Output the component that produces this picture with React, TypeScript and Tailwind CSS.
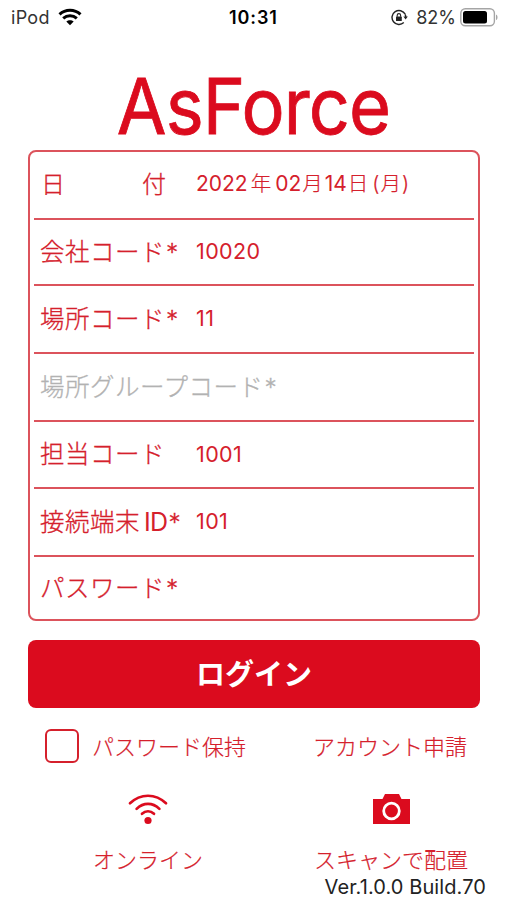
import { useState } from "react";

type Field = {
  label: string;
  latin?: string;
  value?: string;
  required?: boolean;
  muted?: boolean;
  height: string;
};

const fields: Field[] = [
  { label: "会社コード", required: true, value: "10020", height: "h-[66px]" },
  { label: "場所コード", required: true, value: "11", height: "h-[68px]" },
  { label: "場所グループコード", required: true, muted: true, height: "h-[68px]" },
  { label: "担当コード", value: "1001", height: "h-[67px]" },
  { label: "接続端末", latin: "ID", required: true, value: "101", height: "h-[68px]" },
  { label: "パスワード", required: true, height: "h-[65px]" },
];

function StatusBar() {
  return (
    <div className="relative flex h-[34px] items-center justify-between pl-[11px] pr-[8px] text-[#333]">
      <div className="flex items-center gap-[8px]">
        <span className="text-[18px] tracking-[0.3px]">iPod</span>
        <svg width="24" height="18" viewBox="0 0 24 18" fill="none">
          <path d="M1.500 6.300C7.400.8 16.600.8 22.500 6.300" stroke="#000" strokeWidth="3" />
          <path d="M5.200 10.300c3.900-3.500 9.700-3.500 13.600 0" stroke="#000" strokeWidth="3" />
          <path d="M8.300 13.600c2.100-1.900 5.300-1.900 7.400 0L12 17.300z" fill="#000" />
        </svg>
      </div>
      <span className="absolute left-[229px] text-[18px] font-semibold tracking-[0.9px] text-black">
        10:31
      </span>
      <div className="flex items-center">
        <svg width="17" height="17" viewBox="0 0 17 17" fill="none">
          <path d="M14.200 5.200A7 7 0 1 0 12.800 13.600" stroke="#222" strokeWidth="1.400" />
          <path d="M14.100 5.300c.6 1.100.8 2 .7 3.300" stroke="#222" strokeWidth="1.400" />
          <path d="M12.400 7.600h4.400l-2.200 3z" fill="#222" />
          <rect x="5" y="7.600" width="5.800" height="4.400" rx=".6" fill="#222" />
          <path d="M6.200 7.800V6.300a1.700 1.700 0 0 1 3.400 0v1.500" stroke="#222" strokeWidth="1.100" />
        </svg>
        <span className="ml-[8px] text-[18px]">82%</span>
        <svg className="ml-[4px]" width="39" height="19" viewBox="0 0 39 19" fill="none">
          <rect x=".8" y=".8" width="33.600" height="17" rx="4.500" stroke="#a5a5a5" strokeWidth="1.400" />
          <rect x="3" y="3" width="24" height="12.600" rx="2.500" fill="#000" />
          <path d="M36 6.500c2 .8 2 4.800 0 5.600z" fill="#a5a5a5" />
        </svg>
      </div>
    </div>
  );
}

function FieldRow({ label, latin, value, required, muted, height }: Field) {
  return (
    <div
      className={`flex items-center border-t-2 border-[#dc535c] ${height} ${
        muted ? "text-[#b2b2b2]" : "text-[#d5202c]"
      }`}
    >
      <span className="w-[162px] shrink-0 whitespace-nowrap pl-[6px] text-[24.5px] font-light leading-none tracking-[0.5px] [-webkit-text-stroke:0.3px]">
        {label}
        {latin && (
          <span className="ml-[4px] text-[25px] font-normal tracking-[-0.6px] [-webkit-text-stroke:0]">
            {latin}
          </span>
        )}
        {required && <span className="ml-px">*</span>}
      </span>
      {value && <span className="text-[21.5px] leading-none tracking-[0.4px]">{value}</span>}
    </div>
  );
}

export default function App() {
  const [keep, setKeep] = useState(false);

  return (
    <div className="h-[900px] w-[507px] overflow-hidden bg-white font-['Inter','Noto_Sans_CJK_JP',sans-serif]">
      <StatusBar />

      <h1 className="mt-[24px] scale-x-[0.93] text-center text-[77.5px] leading-[96px] tracking-[-1px] text-[#db0b1e] [-webkit-text-stroke:0.8px]">
        AsForce
      </h1>

      <div className="ml-[28px] mt-[-4px] h-[471px] w-[452px] rounded-[8px] border-2 border-[#dc535c] px-[4px]">
        <div className="flex h-[66px] items-center text-[#d5202c]">
          <span className="ml-[7px] flex w-[125px] justify-between text-[24px] font-light leading-none [-webkit-text-stroke:0.3px]">
            <span>日</span>
            <span>付</span>
          </span>
          <span className="mb-[3px] ml-[30px] flex items-baseline whitespace-nowrap text-[20.5px] font-light leading-none [-webkit-text-stroke:0.2px]">
            <span className="text-[21px] font-normal [-webkit-text-stroke:0]">2022</span>
            <span className="ml-[3px]">年</span>
            <span className="ml-[4px] text-[21px] font-normal [-webkit-text-stroke:0]">02</span>
            <span className="ml-[1px]">月</span>
            <span className="ml-[2px] text-[21px] font-normal [-webkit-text-stroke:0]">14</span>
            <span className="ml-[1px]">日</span>
            <span className="ml-[4px]">(</span>
            <span className="ml-[1px]">月</span>
            <span className="ml-[1px]">)</span>
          </span>
        </div>
        {fields.map((field) => (
          <FieldRow key={field.label} {...field} />
        ))}
      </div>

      <button className="ml-[28px] mt-[19px] flex h-[68px] w-[452px] items-center justify-center rounded-[8px] bg-[#db0b1e] text-[29px] font-bold leading-none text-white">
        ログイン
      </button>

      <div className="ml-[45px] mt-[21px] flex h-[34px] items-center text-[22px] font-light leading-none text-[#d5202c] [-webkit-text-stroke:0.2px]">
        <button
          onClick={() => setKeep(!keep)}
          className="flex h-[34px] w-[34px] items-center justify-center rounded-[6px] border-2 border-[#d5202c]"
        >
          {keep && "✓"}
        </button>
        <span className="ml-[13px] mt-[2px] w-[221px]">パスワード保持</span>
        <span className="mt-[2px]">アカウント申請</span>
      </div>

      <div className="mt-[30px] flex text-[22px] font-light leading-none text-[#d5202c] [-webkit-text-stroke:0.2px]">
        <div className="ml-[93px] flex w-[110px] flex-col items-center">
          <svg width="40" height="32" viewBox="0 0 40 32" fill="none" stroke="#db0b1e" strokeLinecap="round">
            <path d="M2 10.300C12.500.2 27.500.2 38 10.300" strokeWidth="2.700" />
            <path d="M8.600 15.900C15.400 9.200 24.600 9.200 31.400 15.900" strokeWidth="2.700" />
            <path d="M14 20.800c3.600-3.300 8.400-3.300 12 0" strokeWidth="2.700" />
            <circle cx="20" cy="27.500" r="3.600" fill="#db0b1e" stroke="none" />
          </svg>
          <span className="mt-[24px] whitespace-nowrap">オンライン</span>
        </div>
        <div className="ml-[111px] flex w-[154px] flex-col items-center">
          <svg width="37" height="32" viewBox="0 0 37 32" fill="none">
            <path d="M0 6h9.500L12 1h14l2.500 5H37v25H0z" fill="#db0b1e" />
            <circle cx="18.500" cy="18" r="7.800" stroke="#fff" strokeWidth="2.800" />
          </svg>
          <span className="mt-[24px] whitespace-nowrap">スキャンで配置</span>
        </div>
      </div>
      <div className="mt-[4px] pr-[21px] text-right text-[20px] leading-[24px] tracking-[0.1px] text-[#222]">
        Ver.1.0.0 Build.70
      </div>
    </div>
  );
}
